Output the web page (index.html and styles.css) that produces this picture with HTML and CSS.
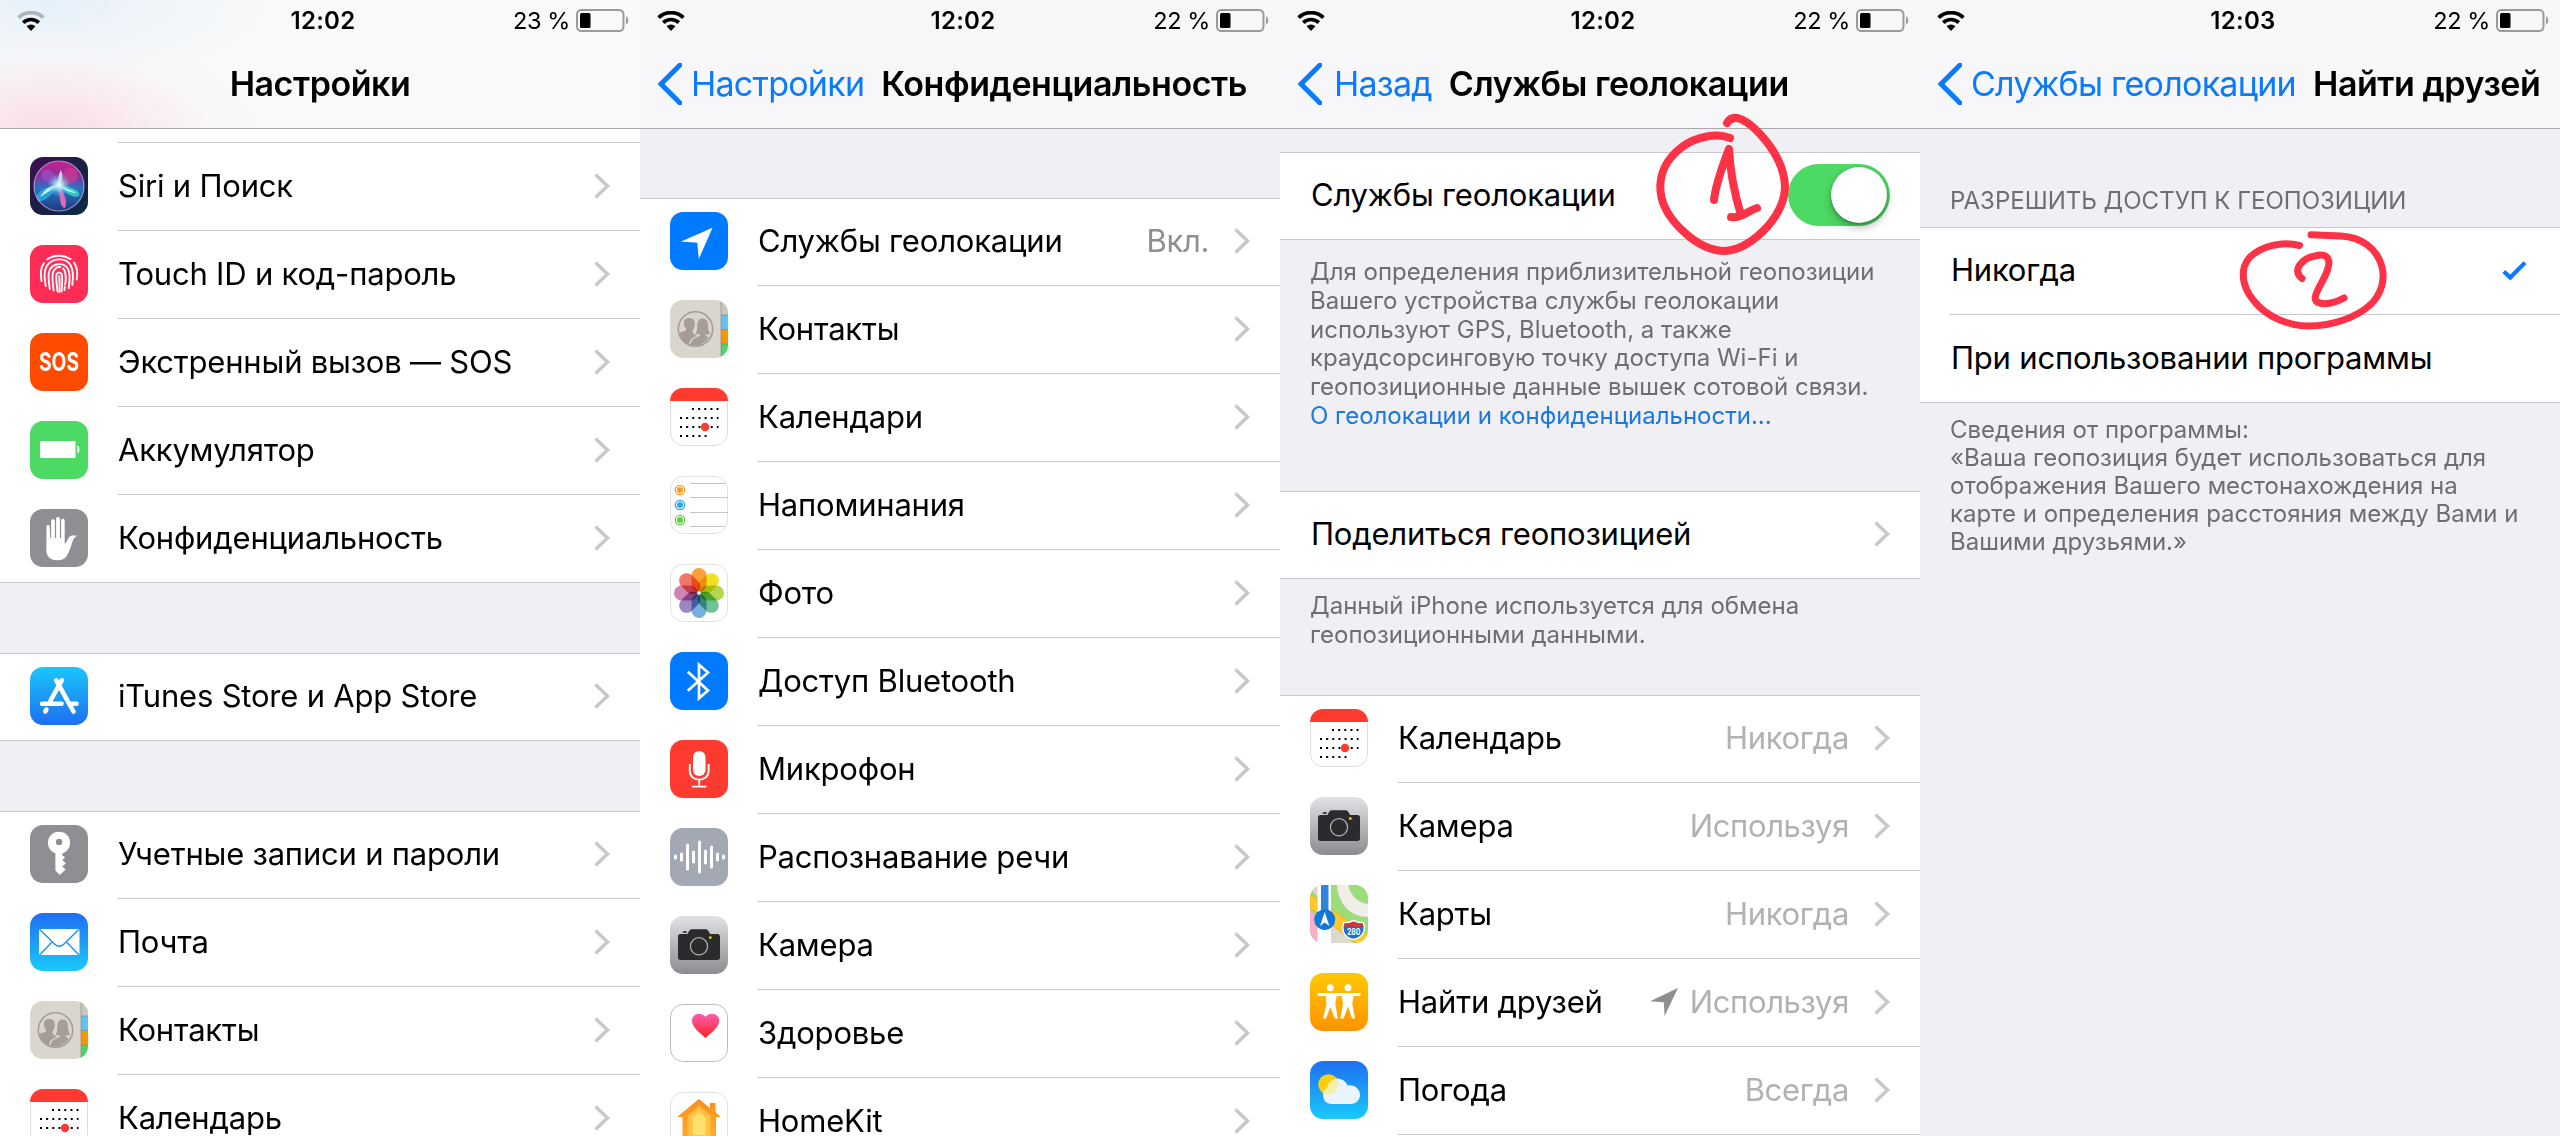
FILE: index.html
```html
<!DOCTYPE html>
<html lang="ru">
<head>
<meta charset="utf-8">
<title>Настройки</title>
<link rel="stylesheet" href="styles.css">
</head>
<body>
<svg class="defs" width="0" height="0" aria-hidden="true">
  <defs>
    <linearGradient id="g-siri" x1="0" y1="0" x2="1" y2="1"><stop offset="0" stop-color="#3d0f52"/><stop offset=".5" stop-color="#1c1f45"/><stop offset="1" stop-color="#0c2a48"/></linearGradient>
    <linearGradient id="g-orb" x1="0" y1="0" x2="0" y2="1"><stop offset="0" stop-color="#c81f92"/><stop offset=".3" stop-color="#8a2f9a"/><stop offset=".55" stop-color="#2a74c8"/><stop offset="1" stop-color="#1d3a80"/></linearGradient>
    <radialGradient id="g-glow"><stop offset="0" stop-color="#fff"/><stop offset=".3" stop-color="#bff4ff" stop-opacity=".8"/><stop offset="1" stop-color="#5ad" stop-opacity="0"/></radialGradient>
    <linearGradient id="g-store" x1="0" y1="0" x2="0" y2="1"><stop offset="0" stop-color="#1ac6fb"/><stop offset="1" stop-color="#1d70f2"/></linearGradient>
    <linearGradient id="g-mail" x1="0" y1="0" x2="0" y2="1"><stop offset="0" stop-color="#1e6ff1"/><stop offset="1" stop-color="#1ac9fc"/></linearGradient>
    <linearGradient id="g-cam" x1="0" y1="0" x2="0" y2="1"><stop offset="0" stop-color="#e1e1e6"/><stop offset="1" stop-color="#8b8b90"/></linearGradient>
    <linearGradient id="g-heart" x1="0" y1="0" x2="0" y2="1"><stop offset="0" stop-color="#fb5fae"/><stop offset="1" stop-color="#fd2225"/></linearGradient>
    <linearGradient id="g-home" x1="0" y1="0" x2="0" y2="1"><stop offset="0" stop-color="#f78f1e"/><stop offset="1" stop-color="#fdb32b"/></linearGradient>
    <linearGradient id="g-friends" x1="0" y1="0" x2="0" y2="1"><stop offset="0" stop-color="#ffc800"/><stop offset="1" stop-color="#ff9300"/></linearGradient>
    <clipPath id="tile"><rect width="58" height="58" rx="13"/></clipPath>
  </defs>

  <symbol id="wifi" viewBox="0 0 28 20">
    <path d="M9.6 15.2 14 20l4.400-4.800a6.400 6.400 0 0 0-8.800 0z"/>
    <path d="M6.200 11.600a11.300 11.300 0 0 1 15.600 0" fill="none" stroke="currentColor" stroke-width="3.600"/>
    <path class="wifi-outer" d="M1.600 6.600a18 18 0 0 1 24.800 0" fill="none" stroke="currentColor" stroke-width="3.800"/>
  </symbol>
  <symbol id="battery" viewBox="0 0 53 23">
    <rect x="1" y="1" width="46.500" height="21" rx="4.500" fill="none" stroke="#9a9a9c" stroke-width="2"/>
    <rect x="4" y="4" width="10.500" height="15" rx="1.500"/>
    <path d="M50 7.500c3 1 3 7 0 8z" fill="#9a9a9c"/>
  </symbol>
  <symbol id="back" viewBox="0 0 24 42"><path d="M22 2 3 21l19 19" fill="none" stroke="#0a7aff" stroke-width="5" stroke-linecap="round" stroke-linejoin="miter"/></symbol>
  <symbol id="chevron" viewBox="0 0 16 26"><path d="M1.500 1.500 13.500 13l-12 11.500" fill="none" stroke="#c7c7cc" stroke-width="3.600"/></symbol>
  <symbol id="check" viewBox="0 0 25 20"><path d="M1.800 10.500 8.300 16.500 23 1.600" fill="none" stroke="#0a7aff" stroke-width="4.200"/></symbol>
  <symbol id="arrow" viewBox="0 0 28 28"><path d="M28 0 0 13.200l13.800 1L14.600 28z"/></symbol>

  <symbol id="i-siri" viewBox="0 0 58 58"><g clip-path="url(#tile)">
    <rect width="58" height="58" fill="url(#g-siri)"/>
    <circle cx="29" cy="29" r="25" fill="url(#g-orb)"/>
    <path d="M29 28C14 26 8 22 13 14c8-4 14 4 16 14z" fill="#9c5bd0" opacity=".55"/>
    <path d="M29 28c2-14 8-20 16-16 6 8 4 16-16 16z" fill="#e0408c" opacity=".55"/>
    <path d="M29 28c-6 8-14 18-21 16-5-8 6-14 21-16z" fill="#2bb6e8" opacity=".75"/>
    <path d="M29 28c14 2 22 6 20 11-6 3-14-3-20-11z" fill="#2fe0c0" opacity=".8"/>
    <path d="M29 28c5 8 9 16 6 23-5 0-6-12-6-23z" fill="#f06bb8" opacity=".9"/>
    <path d="M29 28c-2-6 0-11 2-15 2 6 2 10-2 15zM29 28 10 40c5-8 10-12 19-12zM29 28l18 8c-6 0-13-3-18-8z" fill="#e8ffff" opacity=".85"/>
    <circle cx="29" cy="28" r="12" fill="url(#g-glow)"/>
    <circle cx="29" cy="29" r="25" fill="none" stroke="#c4b0dc" stroke-opacity=".75" stroke-width="1.200"/>
  </g></symbol>
  <symbol id="i-touch" viewBox="0 0 58 58"><rect width="58" height="58" rx="13" fill="#ff2d55"/>
    <g fill="none" stroke="#fff" stroke-width="1.900" stroke-linecap="round">
      <path d="M17 14.500c7-5 16-5 23.500-.5"/>
      <path d="M11.500 36c-.8-7-1.500-12.500 2.500-18M44 17.500c3.500 5 3.800 10.500 2.700 17"/>
      <path d="M15.800 41c-1.300-8-2.300-14 .7-19.500C22 12 36 12.500 40.500 20c3 5 3 11 1.800 20"/>
      <path d="M19.800 44c-1.600-10-2-14-.5-18C22 18 33.500 16.500 38 24c2 4 1.800 12 .7 19"/>
      <path d="M23.700 45.500c-1.400-9.500-1.700-13-1-17 1-5 5-6.800 7.500-6.500M33 23.500c3 2.500 3 7 2.700 12l-.5 4M34.800 42l-.3 3"/>
      <path d="M27.500 46.500c-1-8-1.500-12-1.200-16.500.3-3 5-3.400 5.600 0 .5 5 .3 10-.4 16.500"/>
      <path d="M29.300 31c.3 5 .3 10 .2 16"/>
    </g></symbol>
  <symbol id="i-power" viewBox="0 0 58 58"><rect width="58" height="58" rx="13" fill="#4cd964"/><rect x="10" y="20" width="35.500" height="17" rx="1" fill="#fff"/><path d="M47.200 24.500c3 .8 3 7.200 0 8z" fill="#fff"/></symbol>
  <symbol id="i-hand" viewBox="0 0 58 58"><rect width="58" height="58" rx="13" fill="#8e8e93"/>
    <path fill="#fff" d="M16.500 17.500c0-2 3-2 3.200 0l.5 12h.9V12c0-2.300 3.700-2.300 3.800 0v17h1.200V9.700c0-2.400 3.800-2.400 3.800 0V29h1.200V11.500c0-2.300 3.600-2.300 3.600 0V35c2-1.500 3-5.300 4.500-7 1.800-2 4.600-1.500 8-1.300-2.300 1.300-3.600 2.700-4.500 5.300-2.200 6-3.400 11.500-6.200 15.200-2.500 3.500-6 4-9.500 4-8.500 0-10.700-5-10.700-11.400z"/></symbol>
  <symbol id="i-store" viewBox="0 0 58 58"><rect width="58" height="58" rx="13" fill="url(#g-store)"/>
    <g fill="none" stroke="#fff" stroke-width="4.600" stroke-linecap="round"><path d="M31.800 13.300 20.500 33.500M26.300 13.300 43.500 44.500M12 36.700h19.500M40 36.700h6.500M16.400 42.500l-1.100 1.900"/></g></symbol>
  <symbol id="i-key" viewBox="0 0 58 58"><rect width="58" height="58" rx="13" fill="#8e8e93"/>
    <path fill="#fff" fill-rule="evenodd" d="M29 6.800c-6.500 0-11 4.700-11 11 0 5 2.600 8.500 7.400 10.600V45.500l4.400 4.600 5.800-5.500-3.300-3 3.500-3.300-3.500-3.300 2.900-2.700-2.900-1.800v-2c5-2 7.800-5.600 7.800-10.700 0-6.300-4.500-11-11.100-11zm.1 6.900a3.200 3.200 0 1 1 0 6.400 3.200 3.200 0 0 1 0-6.400z"/></symbol>
  <symbol id="i-mail" viewBox="0 0 58 58"><rect width="58" height="58" rx="13" fill="url(#g-mail)"/><rect x="9" y="16" width="40.500" height="26" rx="2" fill="#fff"/>
    <path d="M10 16.800 24.500 31c3 3 6.500 3 9.500 0l14.500-14.200M10 41.500 22 29M48.500 41.500 36.500 29" fill="none" stroke="#2590f0" stroke-width="1.400"/></symbol>
  <symbol id="i-contacts" viewBox="0 0 58 58"><g clip-path="url(#tile)">
    <rect width="58" height="58" fill="#d9d6cd"/>
    <rect x="51" width="8" height="15" fill="#c9c6bd"/><rect x="51" y="15" width="8" height="15" fill="#5fc3f5"/><rect x="51" y="30" width="8" height="14" fill="#fb9500"/><rect x="51" y="44" width="8" height="14" fill="#4cd562"/>
    <path d="M51 15h7M51 29.500h7M51 44h7M51 0v58" stroke="#7e7b70" stroke-opacity=".55"/>
    <circle cx="25.500" cy="29" r="17.200" fill="none" stroke="#a69d97" stroke-width="1.600"/>
    <path fill="#a69d97" d="M19.500 18c3.800 0 5.500 2.300 5.300 6.500-.1 2.500-1 4.200-2.300 6 0 3.500 2.500 4.200 4.800 5.500-4 1.500-7.500 2-8.300 8.500-6-1.500-9-6.500-9.400-12 3.500-1 6.400-1 6.600-3.500-2-2.500-2.300-4-2.300-6 0-3.500 2.200-5 5.600-5z"/>
    <path fill="#a69d97" d="M32.500 18.500c4 0 5.500 3 5.500 6.500 0 4 .5 6 2.300 8.500-1.600 1-3.500 1-5 .8.200 1.500 1.800 2.200 3.500 3-3.500 6-10.500 9.500-18.300 7.500.8-5 3-6.300 7.500-8 1.500-.5 2-1.300 2-2.500-1.800.2-3.200 0-4.600-.8 2-3 1.800-5 1.900-8.500.2-4 1.700-6.500 5.200-6.500z"/>
  </g></symbol>
  <symbol id="i-calendar" viewBox="0 0 58 58"><g clip-path="url(#tile)"><rect width="58" height="58" fill="#fff"/></g>
    <rect x=".5" y=".5" width="57" height="57" rx="12.500" fill="none" stroke="#dededf"/>
    <path d="M0 13A13 13 0 0 1 13 0h32a13 13 0 0 1 13 13z" fill="#ff3b30"/>
    <g stroke="#000" stroke-width="2" fill="none" stroke-dasharray="2 4.150"><path d="M22 21h26.500M10 30h38.500M10 39h38.500M10 48h26.500"/></g>
    <circle cx="35" cy="39" r="4.200" fill="#ff3b30"/></symbol>
  <symbol id="i-remind" viewBox="0 0 58 58"><rect x=".5" y=".5" width="57" height="57" rx="12.500" fill="#fff" stroke="#e2e2e3"/>
    <path d="M20 7.500h36M20 21.500h38M20 36.500h38M20 50.500h35" stroke="#c4c4c6"/>
    <g fill="#fff" stroke-width="1.200"><circle cx="10" cy="14" r="4.700" stroke="#fa9a1c"/><circle cx="10" cy="29" r="4.700" stroke="#2aa5ea"/><circle cx="10" cy="44" r="4.700" stroke="#62cc45"/></g>
    <circle cx="10" cy="14" r="3" fill="#fa9a1c"/><circle cx="10" cy="29" r="3" fill="#2aa5ea"/><circle cx="10" cy="44" r="3" fill="#62cc45"/></symbol>
  <symbol id="i-photos" viewBox="0 0 58 58"><rect x=".5" y=".5" width="57" height="57" rx="12.500" fill="#fff" stroke="#e2e2e3"/>
    <g class="petals">
      <rect x="21.500" y="4" width="15" height="24" rx="7.500" fill="#f9a137"/>
      <rect x="21.500" y="4" width="15" height="24" rx="7.500" fill="#f2e022" transform="rotate(45 29 29)"/>
      <rect x="21.500" y="4" width="15" height="24" rx="7.500" fill="#b5d650" transform="rotate(90 29 29)"/>
      <rect x="21.500" y="4" width="15" height="24" rx="7.500" fill="#6dc296" transform="rotate(135 29 29)"/>
      <rect x="21.500" y="4" width="15" height="24" rx="7.500" fill="#76aedd" transform="rotate(180 29 29)"/>
      <rect x="21.500" y="4" width="15" height="24" rx="7.500" fill="#9b86c0" transform="rotate(225 29 29)"/>
      <rect x="21.500" y="4" width="15" height="24" rx="7.500" fill="#d183b4" transform="rotate(270 29 29)"/>
      <rect x="21.500" y="4" width="15" height="24" rx="7.500" fill="#f0756a" transform="rotate(315 29 29)"/>
    </g><circle cx="29" cy="29" r="1.800" fill="#fff"/></symbol>
  <symbol id="i-location" viewBox="0 0 58 58"><rect width="58" height="58" rx="13" fill="#007aff"/><path d="M42.500 15.700 11 29.500l16.300 1.200L28.800 47z" fill="#fff"/></symbol>
  <symbol id="i-bt" viewBox="0 0 58 58"><rect width="58" height="58" rx="13" fill="#007aff"/><path d="M17.800 19.800 38 38.500l-9 7.800V12.700l9 7.800L17.800 38.800" fill="none" stroke="#fff" stroke-width="2.700"/></symbol>
  <symbol id="i-mic" viewBox="0 0 58 58"><rect width="58" height="58" rx="13" fill="#ff3b30"/><rect x="23" y="11" width="12.500" height="25" rx="6.250" fill="#fff"/>
    <path d="M19.800 24v7c0 11.500 18.800 11.500 18.800 0v-7M29.200 40v6.300M22 46.600h14.400" fill="none" stroke="#fff" stroke-width="1.900"/></symbol>
  <symbol id="i-speech" viewBox="0 0 58 58"><rect width="58" height="58" rx="13" fill="#a2a9b4"/>
    <path d="M5.500 28v2M11.500 26v6M17.500 17v24M23.500 24v10M29.500 14v30M35.500 23v12M41.500 19v20M47.500 26v6M53.500 28v2" stroke="#fff" stroke-width="3" stroke-linecap="round"/></symbol>
  <symbol id="i-camera" viewBox="0 0 58 58"><rect width="58" height="58" rx="13" fill="url(#g-cam)"/>
    <path fill="#2b2b2d" d="M8 20.500c0-1.500 1-2.500 2.500-2.500h7c1-2 2-4.800 4.500-4.800h13.500c2.500 0 3.500 2.800 4.700 4.800h7.300c1.500 0 2.500 1 2.500 2.500v21c0 1.500-1 2.500-2.500 2.500h-37C9 44 8 43 8 41.500zM12.500 16.800c0-2.400 4.500-2.400 4.500 0z"/>
    <circle cx="29" cy="30.300" r="8.600" fill="none" stroke="#aeb0b0" stroke-width="1.200"/><circle cx="40.300" cy="21.600" r="1.400" fill="#f5d20c"/></symbol>
  <symbol id="i-health" viewBox="0 0 58 58"><rect x=".5" y=".5" width="57" height="57" rx="12.500" fill="#fff" stroke="#bdbdbf"/>
    <path d="M35.500 34C30 29 22 23.500 22 16.800c0-7.500 9-9.500 13.500-4 4.500-5.500 13.700-3.500 13.700 4 0 6.700-8.200 12.200-13.700 17.200z" fill="url(#g-heart)"/></symbol>
  <symbol id="i-home" viewBox="0 0 58 58"><rect x=".5" y=".5" width="57" height="57" rx="12.500" fill="#fff" stroke="#e2e2e3"/>
    <path d="M29 7 7 25h5.500v28H46V25h5L45.500 20v-9H40v5z" fill="url(#g-home)"/>
    <path d="M29 13.500 17.500 23v26H41V23z" fill="#fcb93a"/><path d="M29 16.500 19.500 24.500v22H39v-22z" fill="#fdc648"/><path d="M29 20.500 23 26v17h12.500V26z" fill="#fde16d"/></symbol>
  <symbol id="i-friends" viewBox="0 0 58 58"><rect width="58" height="58" rx="13" fill="url(#g-friends)"/>
    <g fill="#fff"><circle cx="20.300" cy="14.800" r="3.500"/><circle cx="38" cy="14.800" r="3.500"/>
    <path d="M7.500 20h43v3h-7.200l-1 8L45 45.500h-3l-4-12-4.500 12h-3.200l2.700-15-1.300-7.500h-5l-1.500 7.500 2.700 15h-3L20.300 34l-4.300 11.500h-3L16.500 31l-.7-8H7.500z"/></g></symbol>
  <symbol id="i-weather" viewBox="0 0 58 58"><rect width="58" height="58" rx="13" fill="url(#g-mail)"/>
    <circle cx="18.500" cy="23.500" r="10.300" fill="#fdcf0c"/>
    <path d="M21 43a8.500 8.500 0 0 1-3.500-16C19 15.500 34 14.500 37.500 24.500 44.500 23.500 50 28 50 34c0 5-4 9-9 9z" fill="#eaf4fd"/>
    <path d="M17.500 27c1-5.300 4.500-9 9.800-9.600 3 5-.3 15.600-8.400 16.600l-4.600-1.500c.3-2.500 1.500-4 3.200-5.500z" fill="#f5efae"/></symbol>
</svg>

<main class="board">
  <section class="screen">
    <header class="top top-tinted">
      <div class="status"><svg class="wifi wifi-weak"><use href="#wifi"/></svg><span class="clock">12:02</span><span class="power"><span class="charge">23 %</span><svg class="battery"><use href="#battery"/></svg></span></div>
      <div class="nav nav-root"><h1 class="title">Настройки</h1></div>
    </header>
    <div class="peek"></div>
    <ul class="list list-continued">
      <li class="row"><svg class="tile"><use href="#i-siri"/></svg><div class="cell"><span class="label">Siri и Поиск</span><svg class="chevron"><use href="#chevron"/></svg></div></li>
      <li class="row"><svg class="tile"><use href="#i-touch"/></svg><div class="cell"><span class="label">Touch ID и код-пароль</span><svg class="chevron"><use href="#chevron"/></svg></div></li>
      <li class="row"><svg class="tile" viewBox="0 0 58 58"><rect width="58" height="58" rx="13" fill="#ff4b00"/><text class="sos-text" x="9" y="38" textLength="40" lengthAdjust="spacingAndGlyphs">SOS</text></svg><div class="cell"><span class="label">Экстренный вызов — SOS</span><svg class="chevron"><use href="#chevron"/></svg></div></li>
      <li class="row"><svg class="tile"><use href="#i-power"/></svg><div class="cell"><span class="label">Аккумулятор</span><svg class="chevron"><use href="#chevron"/></svg></div></li>
      <li class="row"><svg class="tile"><use href="#i-hand"/></svg><div class="cell"><span class="label">Конфиденциальность</span><svg class="chevron"><use href="#chevron"/></svg></div></li>
    </ul>
    <ul class="list list-spaced">
      <li class="row"><svg class="tile"><use href="#i-store"/></svg><div class="cell"><span class="label">iTunes Store и App Store</span><svg class="chevron"><use href="#chevron"/></svg></div></li>
    </ul>
    <ul class="list list-spaced">
      <li class="row"><svg class="tile"><use href="#i-key"/></svg><div class="cell"><span class="label">Учетные записи и пароли</span><svg class="chevron"><use href="#chevron"/></svg></div></li>
      <li class="row"><svg class="tile"><use href="#i-mail"/></svg><div class="cell"><span class="label">Почта</span><svg class="chevron"><use href="#chevron"/></svg></div></li>
      <li class="row"><svg class="tile"><use href="#i-contacts"/></svg><div class="cell"><span class="label">Контакты</span><svg class="chevron"><use href="#chevron"/></svg></div></li>
      <li class="row"><svg class="tile"><use href="#i-calendar"/></svg><div class="cell"><span class="label">Календарь</span><svg class="chevron"><use href="#chevron"/></svg></div></li>
    </ul>
  </section>

  <section class="screen">
    <header class="top">
      <div class="status"><svg class="wifi"><use href="#wifi"/></svg><span class="clock">12:02</span><span class="power"><span class="charge">22 %</span><svg class="battery"><use href="#battery"/></svg></span></div>
      <div class="nav"><svg class="back"><use href="#back"/></svg><span class="back-label">Настройки</span><h1 class="title">Конфиденциальность</h1></div>
    </header>
    <ul class="list list-first">
      <li class="row"><svg class="tile"><use href="#i-location"/></svg><div class="cell"><span class="label">Службы геолокации</span><span class="value value-dark">Вкл.</span><svg class="chevron"><use href="#chevron"/></svg></div></li>
      <li class="row"><svg class="tile"><use href="#i-contacts"/></svg><div class="cell"><span class="label">Контакты</span><svg class="chevron"><use href="#chevron"/></svg></div></li>
      <li class="row"><svg class="tile"><use href="#i-calendar"/></svg><div class="cell"><span class="label">Календари</span><svg class="chevron"><use href="#chevron"/></svg></div></li>
      <li class="row"><svg class="tile"><use href="#i-remind"/></svg><div class="cell"><span class="label">Напоминания</span><svg class="chevron"><use href="#chevron"/></svg></div></li>
      <li class="row"><svg class="tile"><use href="#i-photos"/></svg><div class="cell"><span class="label">Фото</span><svg class="chevron"><use href="#chevron"/></svg></div></li>
      <li class="row"><svg class="tile"><use href="#i-bt"/></svg><div class="cell"><span class="label">Доступ Bluetooth</span><svg class="chevron"><use href="#chevron"/></svg></div></li>
      <li class="row"><svg class="tile"><use href="#i-mic"/></svg><div class="cell"><span class="label">Микрофон</span><svg class="chevron"><use href="#chevron"/></svg></div></li>
      <li class="row"><svg class="tile"><use href="#i-speech"/></svg><div class="cell"><span class="label">Распознавание речи</span><svg class="chevron"><use href="#chevron"/></svg></div></li>
      <li class="row"><svg class="tile"><use href="#i-camera"/></svg><div class="cell"><span class="label">Камера</span><svg class="chevron"><use href="#chevron"/></svg></div></li>
      <li class="row"><svg class="tile"><use href="#i-health"/></svg><div class="cell"><span class="label">Здоровье</span><svg class="chevron"><use href="#chevron"/></svg></div></li>
      <li class="row"><svg class="tile"><use href="#i-home"/></svg><div class="cell"><span class="label">HomeKit</span><svg class="chevron"><use href="#chevron"/></svg></div></li>
    </ul>
  </section>

  <section class="screen">
    <header class="top">
      <div class="status"><svg class="wifi"><use href="#wifi"/></svg><span class="clock">12:02</span><span class="power"><span class="charge">22 %</span><svg class="battery"><use href="#battery"/></svg></span></div>
      <div class="nav nav-generic"><svg class="back"><use href="#back"/></svg><span class="back-label">Назад</span><h1 class="title">Службы геолокации</h1></div>
    </header>
    <ul class="list list-tight">
      <li class="row row-plain"><div class="cell"><span class="label">Службы геолокации</span><span class="switch"><span class="knob"></span></span></div></li>
    </ul>
    <p class="note note-long">Для определения приблизительной геопозиции<br>Вашего устройства службы геолокации<br>используют GPS, Bluetooth, а также<br>краудсорсинговую точку доступа Wi-Fi и<br>геопозиционные данные вышек сотовой связи.<br><a class="link">О геолокации и конфиденциальности...</a></p>
    <ul class="list">
      <li class="row row-plain"><div class="cell"><span class="label">Поделиться геопозицией</span><svg class="chevron"><use href="#chevron"/></svg></div></li>
    </ul>
    <p class="note note-short">Данный iPhone используется для обмена<br>геопозиционными данными.</p>
    <ul class="list">
      <li class="row"><svg class="tile"><use href="#i-calendar"/></svg><div class="cell"><span class="label">Календарь</span><span class="value">Никогда</span><svg class="chevron"><use href="#chevron"/></svg></div></li>
      <li class="row"><svg class="tile"><use href="#i-camera"/></svg><div class="cell"><span class="label">Камера</span><span class="value">Используя</span><svg class="chevron"><use href="#chevron"/></svg></div></li>
      <li class="row"><svg class="tile" viewBox="0 0 58 58"><g clip-path="url(#tile)">
        <rect width="58" height="58" fill="#9bdd78"/>
        <path d="M27-2c0 20 13 35 33 34V19C49 19 38.500 10 38.500-2z" fill="#f0eee6" stroke="#d2d0c4" stroke-width=".8"/>
        <path d="M0 0h10v14L0 4z" fill="#d9d7cb"/><path d="M0 25l8 8v25H0z" fill="#fab0c4"/>
        <path d="M20 36 46 60H20z" fill="#dcdad0"/>
        <path d="M0 9 58 50v12H50L0 23z" fill="#fcc82c" stroke="#e6ae22" stroke-width=".8"/>
        <rect x="7.500" width="13.500" height="58" fill="#fff"/><rect x="11" width="7.500" height="32" fill="#2e86dc"/>
        <circle cx="14.700" cy="34.700" r="10.500" fill="#1277d8"/><path d="M14.700 27 10 41l4.700-3.500L19.400 41z" fill="#fff"/>
        <path d="M34 37.500c3 .5 6 0 9.500-2 3.500 2 7 2.500 9.700 2 3 8-.5 15-9.700 17-9.500-2-12.500-9-9.500-17z" fill="#1672cf" stroke="#fff" stroke-width="1.500"/>
        <path d="M34.800 38.200c3 .3 6-.2 8.700-1.700 3 1.500 6 2 9 1.700l1 3.500H33.800z" fill="#d93438"/>
        <text class="shield-text" x="37" y="49.500" textLength="13.500" lengthAdjust="spacingAndGlyphs">280</text>
      </g></svg><div class="cell"><span class="label">Карты</span><span class="value">Никогда</span><svg class="chevron"><use href="#chevron"/></svg></div></li>
      <li class="row"><svg class="tile"><use href="#i-friends"/></svg><div class="cell"><span class="label">Найти друзей</span><svg class="arrow"><use href="#arrow"/></svg><span class="value">Используя</span><svg class="chevron"><use href="#chevron"/></svg></div></li>
      <li class="row"><svg class="tile"><use href="#i-weather"/></svg><div class="cell"><span class="label">Погода</span><span class="value">Всегда</span><svg class="chevron"><use href="#chevron"/></svg></div></li>
      <li class="row"></li>
    </ul>
    <svg class="marker" viewBox="0 0 640 300">
      <path d="M450 138C437 133 417 136 402 147C386 159 379 175 380.500 191C382 209 393 222 404 232C416 243 430 251 445 251C462 250 477 238 488 226C499 213 505 200 505 186C504 165 492 147 480 134C470 123 454 111 447 123"/>
      <path d="M434 200C436 182 443 165 449 149C450 170 454 192 461 215M451 217C460 219 468 211 477 208"/>
    </svg>
  </section>

  <section class="screen">
    <header class="top">
      <div class="status"><svg class="wifi"><use href="#wifi"/></svg><span class="clock">12:03</span><span class="power"><span class="charge">22 %</span><svg class="battery"><use href="#battery"/></svg></span></div>
      <div class="nav"><svg class="back"><use href="#back"/></svg><span class="back-label">Службы геолокации</span><h1 class="title">Найти друзей</h1></div>
    </header>
    <h2 class="caption">РАЗРЕШИТЬ ДОСТУП К ГЕОПОЗИЦИИ</h2>
    <ul class="list">
      <li class="row row-plain"><div class="cell"><span class="label">Никогда</span><svg class="check"><use href="#check"/></svg></div></li>
      <li class="row row-plain"><div class="cell"><span class="label">При использовании программы</span></div></li>
    </ul>
    <p class="note note-app">Сведения от программы:<br>«Ваша геопозиция будет использоваться для<br>отображения Вашего местонахождения на<br>карте и определения расстояния между Вами и<br>Вашими друзьями.»</p>
    <svg class="marker marker-thin" viewBox="0 0 640 400">
      <path d="M379.500 245.500C362 241 342 246 330 257C319 269 322 287 334 301C346 316 367 326 389 326C413 326 437 317 450 305C462 294 465 279 462 267C457 248 441 237 421 236L391 234.800"/>
      <path d="M382 278.500C371 270 383 258 395 256C406 253 411 258 408 268C406 279 390 297 397 302C405 306 417 302 424 298"/>
    </svg>
  </section>
</main>
</body>
</html>
```
FILE: styles.css
```css
* { box-sizing: border-box; }

body {
  margin: 0;
  font-family: Inter, "Liberation Sans", sans-serif;
  color: #000;
  background: #efeff4;
}

.defs { display: block; position: absolute; }

.board {
  display: grid;
  grid-template-columns: repeat(4, 640px);
  height: 1136px;
  overflow: hidden;
}

.screen {
  position: relative;
  height: 1136px;
  overflow: hidden;
  background: #efeff4;
}

/* status bar and navigation */

.top {
  height: 129px;
  background: #f7f7f9;
  border-bottom: 1px solid #a9a9ad;
}

.top-tinted {
  background:
    radial-gradient(ellipse 230px 100px at 50px 128px, rgba(250, 218, 227, .9) 0, rgba(250, 222, 230, .55) 35%, rgba(249, 240, 243, .2) 70%, rgba(249, 249, 249, 0) 100%),
    radial-gradient(ellipse 240px 90px at 50px 0, rgba(226, 239, 249, .9) 0, rgba(230, 241, 249, .5) 40%, rgba(249, 249, 249, 0) 100%),
    #f9f9f9;
}

.status {
  display: grid;
  grid-template-columns: 1fr 80px 1fr;
  align-items: center;
  height: 41px;
  padding: 0 11px 0 17px;
}

.wifi { width: 28px; height: 20px; }
.wifi-weak { --outer: .25; }
.wifi-outer { opacity: var(--outer, 1); }

.clock {
  text-align: center;
  font-size: 24px;
  font-weight: 600;
  letter-spacing: 0.3px;
}

.power {
  display: flex;
  align-items: center;
  justify-content: flex-end;
  gap: 6px;
}

.charge {
  font-size: 23.500px;
  letter-spacing: -0.4px;
}

.battery { width: 53px; height: 23px; }

.nav {
  display: flex;
  align-items: center;
  height: 87px;
  padding: 0 18px 2px;
}

.nav-root { justify-content: center; }

.back { width: 24px; height: 42px; flex: none; }

.back-label {
  margin-left: 9px;
  font-size: 34px;
  letter-spacing: -0.75px;
  color: #0a7aff;
  white-space: nowrap;
}

.title {
  margin: 0;
  font-size: 34px;
  font-weight: 600;
  letter-spacing: -0.450px;
  white-space: nowrap;
}

.back-label + .title { margin-left: 17px; }

.nav-generic .back-label { margin-left: 12px; }

/* lists */

.list {
  position: relative;
  margin: 0;
  padding: 0;
  list-style: none;
  background: #fff;
}

.list::before {
  content: "";
  position: absolute;
  inset: 0 0 auto;
  height: 1px;
  background: #c8c7cc;
}

.list-continued::before { display: none; }
.list-spaced { margin-top: 70px; }
.list-first { margin-top: 69px; }
.list-tight { margin-top: 23px; }

.peek {
  height: 14px;
  background: linear-gradient(#c8c7cc, #c8c7cc) 118px 100% / 100% 1px no-repeat #fff;
}

.row {
  display: flex;
  height: 88px;
  padding-left: 30px;
}

.row:last-child { border-bottom: 1px solid #c8c7cc; }

.tile {
  flex: none;
  width: 58px;
  height: 58px;
  margin: 14px 30px 0 0;
}

.cell {
  display: flex;
  flex: 1;
  align-items: center;
  padding-right: 30px;
  padding-bottom: 2px;
}

.row:not(:last-child) .cell { border-bottom: 1px solid #c8c7cc; }

.label {
  flex: 1;
  font-size: 31px;
  letter-spacing: -0.2px;
  white-space: nowrap;
}

.row-plain .label { padding-left: 1px; }

.value {
  font-size: 31px;
  letter-spacing: -0.350px;
  color: #b2b2b5;
}

.value-dark { color: #8e8e93; }

.chevron { flex: none; width: 16px; height: 26px; margin-left: 25px; }
.check { flex: none; width: 25px; height: 20px; margin: 2px 3px 0 0; }
.arrow { flex: none; width: 28px; height: 28px; margin-right: 12px; fill: #8e8e93; }

.switch {
  display: flex;
  justify-content: flex-end;
  width: 102px;
  height: 62px;
  padding: 3px;
  border-radius: 31px;
  background: #4cd964;
}

.knob {
  width: 56px;
  height: 56px;
  border-radius: 50%;
  background: #fff;
  box-shadow: 0 5px 8px rgba(0, 0, 0, .25), 0 1px 3px rgba(0, 0, 0, .3);
}

/* explanatory texts */

.note {
  margin: 0;
  padding: 18px 30px 0;
  font-size: 24px;
  line-height: 28.750px;
  color: #6d6d72;
  white-space: nowrap;
}

.note-long { height: 251px; }
.note-short { height: 116px; padding-top: 13px; }
.note-app { padding-top: 13px; line-height: 28px; }

.link { color: #1a78e0; }

.caption {
  height: 98px;
  margin: 0;
  padding: 57px 30px 0;
  font-size: 24px;
  font-weight: 400;
  line-height: 30px;
  color: #6d6d72;
  white-space: nowrap;
}

/* text inside the icons */

.sos-text { font-size: 25px; font-weight: 700; fill: #fff; }
.shield-text { font-size: 8.500px; font-weight: 700; fill: #fff; }

.petals { isolation: isolate; }
.petals rect { mix-blend-mode: multiply; }

/* hand-drawn step numbers */

.marker {
  position: absolute;
  top: 0;
  left: 0;
  width: 640px;
  fill: none;
  stroke: #fd3246;
  stroke-width: 8px;
  stroke-linecap: round;
  stroke-linejoin: round;
}

.marker-thin { stroke-width: 7px; }
```
